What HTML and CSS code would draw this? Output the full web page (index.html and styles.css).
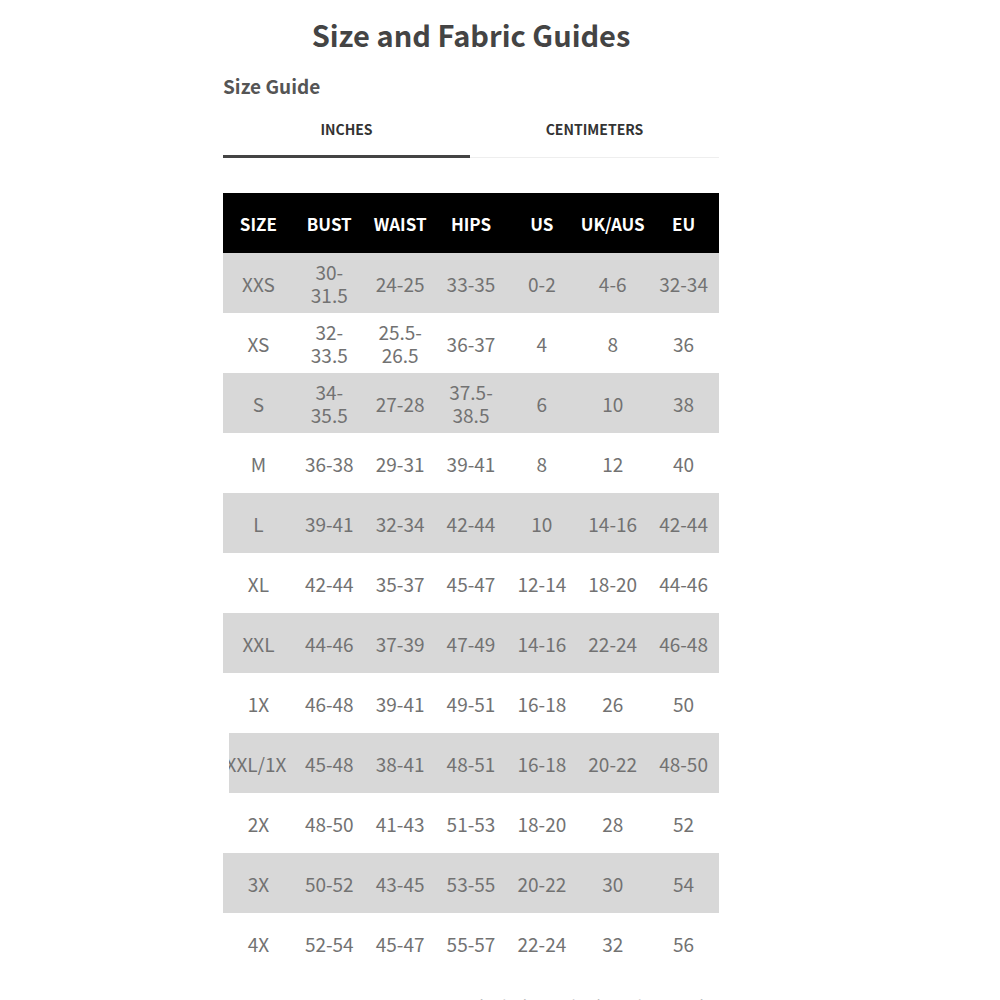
FILE: index.html
```html
<!DOCTYPE html>
<html>
<head>
<meta charset="utf-8">
<link rel="stylesheet" href="styles.css">
</head>
<body>
<div class="page">
  <h1 class="title">Size and Fabric Guides</h1>
  <h2 class="subtitle">Size Guide</h2>
  <div class="tabs">
    <div class="tab active">INCHES</div>
    <div class="tab">CENTIMETERS</div>
  </div>
  <div class="table">
    <div class="row head"><div>SIZE</div><div>BUST</div><div>WAIST</div><div>HIPS</div><div>US</div><div>UK/AUS</div><div>EU</div></div>
    <div class="row grey"><div>XXS</div><div>30-<br>31.5</div><div>24-25</div><div>33-35</div><div>0-2</div><div>4-6</div><div>32-34</div></div>
    <div class="row"><div>XS</div><div>32-<br>33.5</div><div>25.5-<br>26.5</div><div>36-37</div><div>4</div><div>8</div><div>36</div></div>
    <div class="row grey"><div>S</div><div>34-<br>35.5</div><div>27-28</div><div>37.5-<br>38.5</div><div>6</div><div>10</div><div>38</div></div>
    <div class="row"><div>M</div><div>36-38</div><div>29-31</div><div>39-41</div><div>8</div><div>12</div><div>40</div></div>
    <div class="row grey"><div>L</div><div>39-41</div><div>32-34</div><div>42-44</div><div>10</div><div>14-16</div><div>42-44</div></div>
    <div class="row"><div>XL</div><div>42-44</div><div>35-37</div><div>45-47</div><div>12-14</div><div>18-20</div><div>44-46</div></div>
    <div class="row grey"><div>XXL</div><div>44-46</div><div>37-39</div><div>47-49</div><div>14-16</div><div>22-24</div><div>46-48</div></div>
    <div class="row"><div>1X</div><div>46-48</div><div>39-41</div><div>49-51</div><div>16-18</div><div>26</div><div>50</div></div>
    <div class="row grey shifted"><div class="clip"><span>XXL/1X</span></div><div>45-48</div><div>38-41</div><div>48-51</div><div>16-18</div><div>20-22</div><div>48-50</div></div>
    <div class="row"><div>2X</div><div>48-50</div><div>41-43</div><div>51-53</div><div>18-20</div><div>28</div><div>52</div></div>
    <div class="row grey"><div>3X</div><div>50-52</div><div>43-45</div><div>53-55</div><div>20-22</div><div>30</div><div>54</div></div>
    <div class="row"><div>4X</div><div>52-54</div><div>45-47</div><div>55-57</div><div>22-24</div><div>32</div><div>56</div></div>
  </div>
  <p class="note">Varies by item. Check Product Details</p>
</div>
</body>
</html>
```

FILE: styles.css
```css
html, body {
  margin: 0;
  padding: 0;
  background: #fff;
  height: 1000px;
  overflow: hidden;
}
body {
  font-family: "Noto Sans CJK SC", "Noto Sans", sans-serif;
  color: #666;
}
.page {
  width: 496px;
  margin-left: 223px;
}
.title {
  margin: 0;
  padding-top: 12px;
  height: 44px;
  font-size: 29px;
  line-height: 44px;
  font-weight: 700;
  color: #444;
  text-align: center;
}
.subtitle {
  margin: 0;
  margin-top: 15px;
  height: 30px;
  font-size: 19px;
  line-height: 30px;
  font-weight: 700;
  color: #555;
}
.tabs {
  display: grid;
  grid-template-columns: 247px 249px;
  margin-top: 12px;
}
.tab {
  height: 45px;
  line-height: 24px;
  font-size: 14px;
  font-weight: 700;
  color: #333;
  text-align: center;
  border-bottom: 1px solid #eee;
  box-sizing: border-box;
  padding-top: 4px;
}
.tab.active {
  border-bottom: 3px solid #444;
}
.table {
  margin-top: 35px;
}
.row {
  display: grid;
  grid-template-columns: repeat(7, 1fr);
  height: 60px;
  align-items: center;
  text-align: center;
  font-size: 19px;
  line-height: 23px;
  color: #727272;
}
.row.head {
  background: #000;
  color: #fff;
  font-weight: 700;
  font-size: 17px;
}
.row.grey {
  background: #d8d8d8;
}
.row.shifted {
  margin-left: 6px;
  grid-template-columns: 64.86px repeat(6, 1fr);
}
.clip {
  overflow: hidden;
  white-space: nowrap;
  position: relative;
  height: 23px;
}
.clip span {
  position: absolute;
  left: -10px;
  width: 74px;
  text-align: center;
}
.note {
  margin: 22px 4px 0 0;
  text-align: right;
  font-size: 15px;
  color: #aaa;
}
```
